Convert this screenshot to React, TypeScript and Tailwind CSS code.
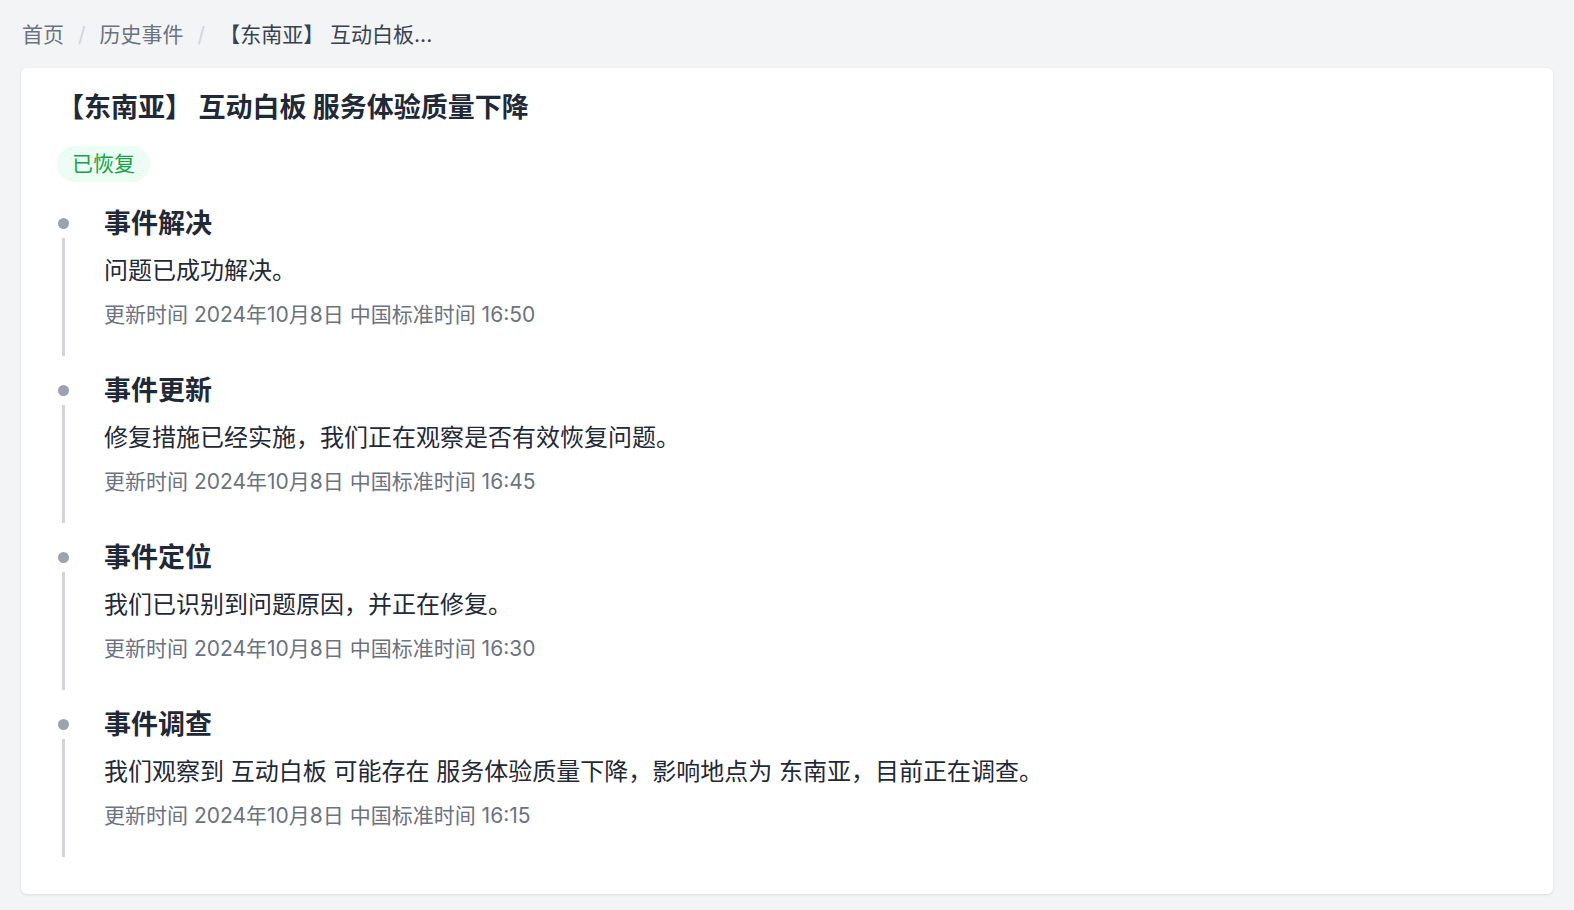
import React from "react";

const items = [
	{ title: "事件解决", desc: "问题已成功解决。", time: "更新时间 2024年10月8日 中国标准时间 16:50" },
	{ title: "事件更新", desc: "修复措施已经实施，我们正在观察是否有效恢复问题。", time: "更新时间 2024年10月8日 中国标准时间 16:45" },
	{ title: "事件定位", desc: "我们已识别到问题原因，并正在修复。", time: "更新时间 2024年10月8日 中国标准时间 16:30" },
	{
		title: "事件调查",
		desc: "我们观察到 互动白板 可能存在 服务体验质量下降，影响地点为 东南亚，目前正在调查。",
		time: "更新时间 2024年10月8日 中国标准时间 16:15",
	},
];

const App = () => {
	return (
		<div
			className="min-h-[910px] bg-[#f3f4f6] px-[21px] pt-[20px] pb-[20px]"
			style={{ fontFamily: 'Inter, "Noto Sans CJK SC", sans-serif' }}
		>
			<div className="flex items-center text-[21px] leading-[30px] text-[#6b7280] pl-[1px]">
				<span>首页</span>
				<span className="mx-[14px] text-[#d1d5db]">/</span>
				<span>历史事件</span>
				<span className="mx-[14px] text-[#d1d5db]">/</span>
				<span className="text-[#374151]">【东南亚】 互动白板...</span>
			</div>
			<div className="mt-[18px] bg-white rounded-md shadow-[0_1px_3px_rgba(0,0,0,0.1)] px-[36px] pt-[22px] pb-[24px]">
				<h1 className="text-[27px] leading-[36px] font-bold text-[#1f2937]">【东南亚】 互动白板 服务体验质量下降</h1>
				<div className="mt-[20px] inline-flex h-[36px] items-center rounded-full bg-[#ecfdf5] px-[15px] text-[21px] text-[#16a34a]">
					已恢复
				</div>
				<div className="mt-[20px] flex flex-col">
					{items.map((it) => (
						<div key={it.title} className="flex">
							<div className="w-[12px] flex flex-col items-center pt-[16px] pl-[1px]">
								<div className="w-[11px] h-[11px] rounded-full bg-[#9ca3af]" />
								<div className="mt-[9px] w-[3px] h-[118px] bg-[#d1d5db]" />
							</div>
							<div className="ml-[35px] h-[167px] pt-[2px]">
								<div className="text-[27px] leading-[40px] font-bold text-[#1f2937]">{it.title}</div>
								<div className="mt-[10px] text-[24px] leading-[34px] text-[#1f2937]">{it.desc}</div>
								<div className="mt-[12px] text-[21px] leading-[30px] text-[#6b7280]">{it.time}</div>
							</div>
						</div>
					))}
				</div>
			</div>
		</div>
	);
};

export default App;
